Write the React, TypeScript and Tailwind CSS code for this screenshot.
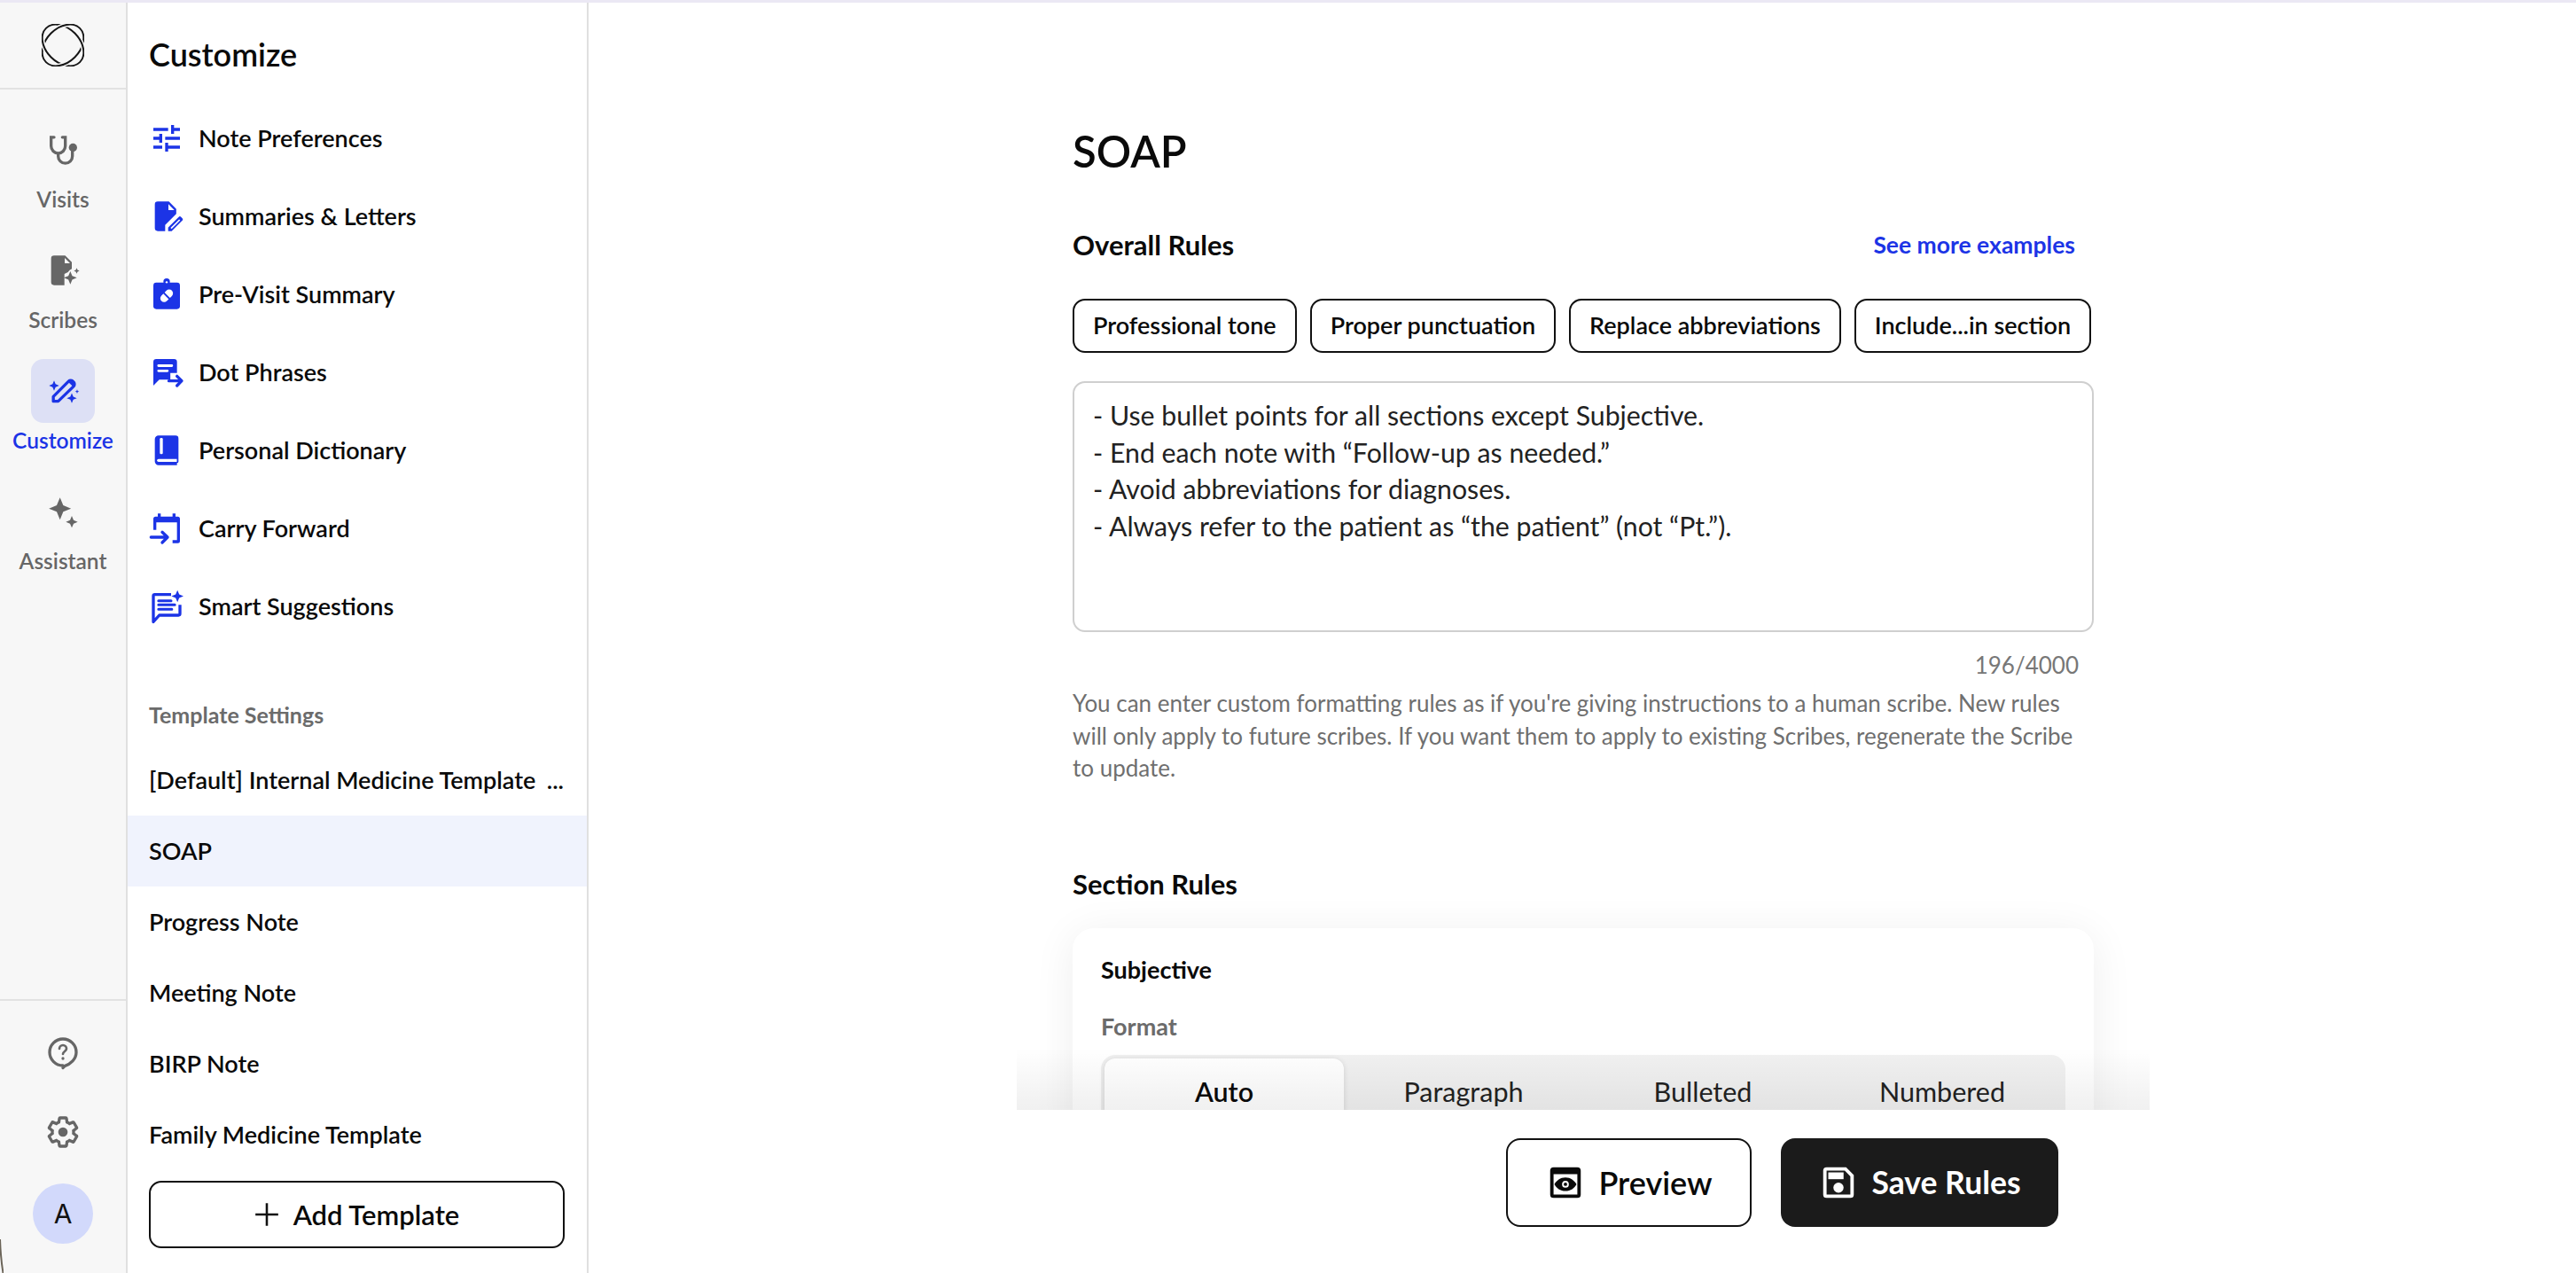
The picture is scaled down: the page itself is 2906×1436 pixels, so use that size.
import React from "react";

const BLUE = "#1c34e6";

function Svg({ className, children, vb = "0 0 24 24" }: { className?: string; children: React.ReactNode; vb?: string }) {
  return (
    <svg viewBox={vb} className={className} fill="currentColor">
      {children}
    </svg>
  );
}

const Tune = () => (
  <Svg className="w-10 h-10">
    <path d="M3 17v2h6v-2H3zM3 5v2h10V5H3zm10 16v-2h8v-2h-8v-2h-2v6h2zM7 9v2H3v2h4v2h2V9H7zm14 4v-2H11v2h10zm-6-4h2V7h4V5h-4V3h-2v6z" />
  </Svg>
);
const EditDoc = () => (
  <Svg className="w-10 h-10">
    <path d="M6 2h7.500L18.500 7v3.400L11 17.900V22H6a2 2 0 0 1-2-2V4a2 2 0 0 1 2-2z" />
    <path d="M13.200 3.800v4h4z" fill="#fff" />
    <path d="M13 22v-2.400l7.200-7.200a1.100 1.100 0 0 1 1.500 0l.9.9a1.100 1.100 0 0 1 0 1.500L15.400 22z" />
    <path d="M15 20.200l5.800-5.800" stroke="#fff" strokeWidth="1" fill="none" />
  </Svg>
);
const ClipPill = () => (
  <Svg className="w-10 h-10">
    <rect x="3" y="4" width="18" height="18" rx="2" />
    <circle cx="12" cy="3.400" r="2.200" />
    <circle cx="12" cy="3.800" r=".7" fill="#fff" />
    <g transform="rotate(-45 12 13)">
      <rect x="7" y="10.400" width="10" height="5.200" rx="2.600" fill="#fff" />
      <rect x="11.400" y="10" width="1.200" height="6" />
    </g>
  </Svg>
);
const ChatArrow = () => (
  <Svg className="w-10 h-10">
    <path d="M5 3h12a2 2 0 0 1 2 2v7.500h-4.500V17H7l-4 4V5a2 2 0 0 1 2-2z" />
    <path d="M6.500 7.500h9M6.500 11h6" stroke="#fff" strokeWidth="1.700" strokeLinecap="round" fill="none" />
    <path d="M13.500 17.800h8.500M19 14.600l3.200 3.200-3.200 3.200" stroke="currentColor" strokeWidth="2" strokeLinecap="round" strokeLinejoin="round" fill="none" />
  </Svg>
);
const Book = () => (
  <Svg className="w-10 h-10">
    <path d="M6.500 2H18a2 2 0 0 1 2 2v15.600a1 1 0 0 1-1 1V22H6.500A2.500 2.500 0 0 1 4 19.500v-15A2.500 2.500 0 0 1 6.500 2z" />
    <rect x="7.400" y="3.600" width="2" height="11" rx=".8" fill="#fff" />
    <path d="M6.500 17.800h12.400v2H6.500a1 1 0 0 1 0-2z" fill="#fff" />
  </Svg>
);
const CalArrow = () => (
  <Svg className="w-10 h-10">
    <path d="M3 5.500A1.500 1.500 0 0 1 4.500 4H6V2h2v2h8V2h2v2h1.500A1.500 1.500 0 0 1 21 5.500V8H3z" />
    <path d="M3 7h2v6H3zM19 7h2v13.500a1.500 1.500 0 0 1-1.500 1.500H16v-2h3z" />
    <path d="M1.400 18h11M9 14.600l3.600 3.400L9 21.600" stroke="currentColor" strokeWidth="2" strokeLinecap="round" strokeLinejoin="round" fill="none" />
  </Svg>
);
const ChatSpark = () => (
  <Svg className="w-10 h-10">
    <path d="M15 4H4a1 1 0 0 0-1 1v17.500L7 18h13a1 1 0 0 0 1-1v-6" stroke="currentColor" strokeWidth="2" fill="none" strokeLinejoin="round" />
    <path d="M6.500 8.200h8.500M6.500 11h11M6.500 14h9" stroke="currentColor" strokeWidth="1.800" strokeLinecap="round" fill="none" />
    <path d="M19.300 1l1.200 2.900 2.900 1.200-2.900 1.200-1.200 2.900-1.200-2.900-2.900-1.200 2.900-1.200z" />
  </Svg>
);

const Logo = () => (
  <svg viewBox="0 0 48 48" className="w-[48px] h-[48px]" fill="none" strokeWidth="2">
    <defs>
      <clipPath id="logo-sides">
        <rect x="0" y="14" width="12" height="20" />
        <rect x="36" y="14" width="12" height="20" />
      </clipPath>
    </defs>
    <ellipse cx="24" cy="24" rx="27" ry="19" transform="rotate(45 24 24)" stroke="#161616" />
    <ellipse cx="24" cy="24" rx="27" ry="19" transform="rotate(-45 24 24)" stroke="#f7f7f7" strokeWidth="5" />
    <ellipse cx="24" cy="24" rx="27" ry="19" transform="rotate(-45 24 24)" stroke="#161616" />
    <g clipPath="url(#logo-sides)">
      <ellipse cx="24" cy="24" rx="27" ry="19" transform="rotate(45 24 24)" stroke="#f7f7f7" strokeWidth="5" />
      <ellipse cx="24" cy="24" rx="27" ry="19" transform="rotate(45 24 24)" stroke="#161616" />
    </g>
  </svg>
);

const Stetho = () => (
  <Svg className="w-10 h-10">
    <path d="M6 3.500H4v6a4.800 4.800 0 0 0 9.600 0v-6h-2" stroke="currentColor" strokeWidth="2" fill="none" strokeLinecap="round" />
    <path d="M8.800 14.300v2a4.800 4.800 0 0 0 9.600 0v-4.500" stroke="currentColor" strokeWidth="2" fill="none" />
    <circle cx="18.800" cy="10.500" r="2.800" />
  </Svg>
);
const DocSpark = () => (
  <Svg className="w-10 h-10">
    <path d="M6 2h7.500l4.500 4.500V11a6 6 0 0 0-2.600 2.200L13 14.400V22H6a2 2 0 0 1-2-2V4a2 2 0 0 1 2-2z" />
    <path d="M13.200 3.600v3.600h3.600z" fill="#f7f7f7" />
    <path d="M17 12.600l1.300 3.100 3.100 1.300-3.100 1.300-1.300 3.100-1.300-3.100-3.100-1.300 3.100-1.300z" />
    <path d="M21.300 10.400l.6 1.300 1.300.6-1.300.6-.6 1.300-.6-1.300-1.300-.6 1.300-.6z" />
  </Svg>
);
const PenSpark = () => (
  <Svg className="w-10 h-10">
    <path d="M5.500 19v-3.200L15.800 5.500a2 2 0 0 1 2.800 0l.6.6a2 2 0 0 1 0 2.800L8.800 19z" stroke="currentColor" strokeWidth="2" fill="none" strokeLinejoin="round" />
    <path d="M15.500 5.800l3.400 3.400 1-1.200a1.800 1.800 0 0 0-.1-2.600l-.5-.5a1.800 1.800 0 0 0-2.600 0z" />
    <path d="M6 5l1 2.400L9.400 8.400 7 9.400 6 11.800 5 9.400 2.600 8.400 5 7.400z" />
    <path d="M18 13.500l1 2.400 2.400 1-2.400 1-1 2.400-1-2.400-2.400-1 2.400-1z" />
    <path d="M21.600 11l.4 1 1 .4-1 .4-.4 1-.4-1-1-.4 1-.4z" />
  </Svg>
);
const Sparkles = () => (
  <Svg className="w-10 h-10">
    <path d="M10 2.500l2.200 5.300 5.300 2.200-5.300 2.200-2.200 5.300-2.200-5.300L2.500 10l5.300-2.200z" />
    <path d="M18 15l1.200 2.800L22 19l-2.800 1.200L18 23l-1.200-2.800L14 19l2.800-1.200z" />
  </Svg>
);
const Help = () => (
  <Svg className="w-10 h-10">
    <path d="M12 3a9 9 0 0 1 9 9c0 4.700-4 8-7.600 9.200l-1.400 1.300V21a9 9 0 0 1 0-18z" stroke="currentColor" strokeWidth="2" fill="none" strokeLinejoin="round" />
    <path d="M9.600 9.600A2.400 2.400 0 0 1 14.400 9.600c0 1.700-2.400 1.900-2.400 3.600" stroke="currentColor" strokeWidth="1.600" fill="none" strokeLinecap="round" />
    <circle cx="12" cy="16.200" r="1" />
  </Svg>
);
const Gear = () => (
  <Svg className="w-10 h-10">
    <path
      d="M19.140 12.940c.04-.3.06-.61.06-.94 0-.32-.02-.64-.07-.94l2.030-1.580c.18-.14.23-.41.12-.61l-1.920-3.320c-.12-.22-.37-.29-.59-.22l-2.390.96c-.5-.38-1.030-.7-1.620-.94l-.36-2.540c-.04-.24-.24-.41-.48-.41h-3.840c-.24 0-.43.17-.47.41l-.36 2.540c-.59.24-1.130.57-1.620.94l-2.390-.96c-.22-.08-.47 0-.59.22L2.740 8.870c-.12.21-.08.47.12.61l2.030 1.580c-.05.3-.09.63-.09.94s.02.64.07.94l-2.030 1.580c-.18.14-.23.41-.12.61l1.920 3.320c.12.22.37.29.59.22l2.390-.96c.5.38 1.030.7 1.620.94l.36 2.540c.05.24.24.41.48.41h3.840c.24 0 .44-.17.47-.41l.36-2.540c.59-.24 1.130-.56 1.620-.94l2.390.96c.22.08.47 0 .59-.22l1.920-3.320c.12-.22.07-.47-.12-.61l-2.010-1.580z"
      stroke="currentColor"
      strokeWidth="2"
      fill="none"
    />
    <circle cx="12" cy="12" r="3.200" />
  </Svg>
);
const Plus = () => (
  <svg viewBox="0 0 24 24" className="w-7 h-7" fill="none" stroke="#111" strokeWidth="2.200">
    <path d="M12 1v22M1 12h22" />
  </svg>
);
const PreviewIcon = () => (
  <Svg className="w-[46px] h-[46px]">
    <path fillRule="evenodd" d="M5 3h14a2 2 0 0 1 2 2v14a2 2 0 0 1-2 2H5a2 2 0 0 1-2-2V5a2 2 0 0 1 2-2zm0 4v12h14V7z" />
    <path fillRule="evenodd" d="M12 9c3 0 5.300 1.800 6.500 4-1.200 2.200-3.500 4-6.500 4s-5.300-1.800-6.500-4C6.700 10.800 9 9 12 9zm0 2a2 2 0 1 0 0 4 2 2 0 0 0 0-4z" />
    <circle cx="12" cy="13" r="1" />
  </Svg>
);
const SaveIcon = () => (
  <Svg className="w-[46px] h-[46px]">
    <path fillRule="evenodd" d="M5 3h11.500L21 7.500V19a2 2 0 0 1-2 2H5a2 2 0 0 1-2-2V5a2 2 0 0 1 2-2zm0 2v14h14V8.300L15.700 5z" />
    <path d="M6 6h9v4H6z" />
    <circle cx="12" cy="15" r="3" />
  </Svg>
);

function RailItem({ icon, label, active }: { icon: React.ReactNode; label: string; active?: boolean }) {
  return (
    <div className={`flex flex-col items-center ${active ? "text-[#1c34e6]" : "text-[#666666]"}`}>
      <div className={`w-[72px] h-[72px] rounded-[14px] flex items-center justify-center ${active ? "bg-[#dde0f5]" : ""}`}>{icon}</div>
      <div className="mt-[4px] text-[24.5px] leading-[32px] font-semibold">{label}</div>
    </div>
  );
}

const menu = [
  { icon: <Tune />, label: "Note Preferences" },
  { icon: <EditDoc />, label: "Summaries & Letters" },
  { icon: <ClipPill />, label: "Pre-Visit Summary" },
  { icon: <ChatArrow />, label: "Dot Phrases" },
  { icon: <Book />, label: "Personal Dictionary" },
  { icon: <CalArrow />, label: "Carry Forward" },
  { icon: <ChatSpark />, label: "Smart Suggestions" },
];

const templates = ["SOAP", "Progress Note", "Meeting Note", "BIRP Note", "Family Medicine Template"];
const chips = ["Professional tone", "Proper punctuation", "Replace abbreviations", "Include...in section"];
const rules = `- Use bullet points for all sections except Subjective.
- End each note with “Follow-up as needed.”
- Avoid abbreviations for diagnoses.
- Always refer to the patient as “the patient” (not “Pt.”).`;

export default function App() {
  return (
    <div className="w-full h-screen bg-white flex flex-col overflow-hidden text-[#0a0a0a] font-['Lato','Liberation_Sans',sans-serif]">
      <div className="h-[3px] shrink-0 bg-[#ebe8f4]" />
      <div className="flex-1 min-h-0 flex">
        <aside className="relative w-[144px] shrink-0 bg-[#f7f7f7] border-r-2 border-[#e0e0e0] flex flex-col">
          <div className="h-[98px] shrink-0 border-b-2 border-[#e2e2e2] flex items-center justify-center">
            <Logo />
          </div>
          <nav className="pt-[32px] flex flex-col gap-[28px]">
            <RailItem icon={<Stetho />} label="Visits" />
            <RailItem icon={<DocSpark />} label="Scribes" />
            <RailItem icon={<PenSpark />} label="Customize" active />
            <RailItem icon={<Sparkles />} label="Assistant" />
          </nav>
          <div className="mt-auto border-t-2 border-[#e2e2e2] h-[309px] shrink-0 flex flex-col items-center text-[#666666]">
            <div className="mt-[38px]">
              <Help />
            </div>
            <div className="mt-[50px]">
              <Gear />
            </div>
            <div className="mt-[38px] w-[68px] h-[68px] rounded-full bg-[#d2d9fb] flex items-center justify-center text-[30px] text-[#111] font-['Inter',sans-serif]">
              A
            </div>
          </div>
          <svg viewBox="0 0 4 38" className="absolute left-0 bottom-0 w-[4px] h-[38px]" fill="none" stroke="#6b6458" strokeWidth="2">
            <path d="M0 0c.5 14 1.500 26 3.500 38" />
          </svg>
        </aside>

        <aside className="w-[520px] shrink-0 border-r-2 border-[#e0e0e0] flex flex-col">
          <h2 className="pl-[24px] pt-[36px] text-[36px] leading-[44px] font-semibold">Customize</h2>
          <ul className="mt-[29px]">
            {menu.map((m) => (
              <li key={m.label} className="h-[88px] pl-[24px] flex items-center gap-[16px] text-[27px] font-semibold">
                <span style={{ color: BLUE }} className="flex">
                  {m.icon}
                </span>
                <span>{m.label}</span>
              </li>
            ))}
          </ul>
          <div className="mt-[62px] pl-[24px] text-[25px] leading-[32px] font-bold text-[#6b6b6b]">Template Settings</div>
          <ul className="mt-[18px]">
            <li className="h-[80px] pl-[24px] pr-[26px] flex items-center justify-between text-[27px] font-semibold">
              <span>[Default] Internal Medicine Template</span>
              <span>...</span>
            </li>
            {templates.map((t) => (
              <li key={t} className={`h-[80px] pl-[24px] flex items-center text-[27px] font-semibold ${t === "SOAP" ? "bg-[#f0f3fd]" : ""}`}>
                {t}
              </li>
            ))}
          </ul>
          <button className="mt-[12px] ml-[24px] w-[469px] h-[76px] rounded-[14px] border-2 border-[#111] flex items-center justify-center gap-[16px] text-[31px] font-semibold">
            <Plus />
            Add Template
          </button>
        </aside>

        <main className="flex-1 min-w-0 flex flex-col items-center pl-[2px]">
          <div className="relative w-[1278px] h-[1249px] shrink-0 overflow-hidden">
            <div className="mx-auto w-[1152px] pt-[137px]">
              <h1 className="text-[49px] leading-[60px] font-semibold">SOAP</h1>
              <div className="mt-[56px] flex items-center justify-between pr-[21px]">
                <h3 className="text-[31px] leading-[40px] font-bold">Overall Rules</h3>
                <a className="text-[26.5px] leading-[40px] font-bold text-[#1c34e6]">See more examples</a>
              </div>
              <div className="mt-[41px] flex gap-[15px]">
                {chips.map((c) => (
                  <button key={c} className="h-[61px] px-[21px] rounded-[14px] border-2 border-[#111] text-[27px] font-semibold whitespace-nowrap">
                    {c}
                  </button>
                ))}
              </div>
              <textarea
                readOnly
                defaultValue={rules}
                className="mt-[32px] block w-full h-[283px] resize-none rounded-[14px] border-2 border-[#cfcfcf] pt-[16px] px-[21px] text-[30.25px] leading-[41.7px] text-[#222] outline-none"
              />
              <div className="mt-[19px] pr-[17px] text-right text-[26px] leading-[36px] text-[#777777]">196/4000</div>
              <p className="mt-[7px] text-[26px] leading-[36.5px] text-[#6f6f6f]">
                You can enter custom formatting rules as if you're giving instructions to a human scribe. New rules will only apply to future scribes. If you want them to apply to existing Scribes, regenerate the Scribe to update.
              </p>
              <h3 className="mt-[92px] text-[31px] leading-[40px] font-bold">Section Rules</h3>
              <section className="mt-[30px] rounded-[24px] bg-white px-[32px] pt-[29px] shadow-[0_6px_48px_rgba(0,0,0,0.07)]">
                <div className="text-[27px] leading-[36px] font-bold">Subjective</div>
                <div className="mt-[28px] text-[27px] leading-[36px] font-bold text-[#6b6b6b]">Format</div>
                <div className="mt-[14px] grid grid-cols-4 rounded-[16px] bg-[#f1f1f1] p-[4px] text-[30.5px]">
                  {["Auto", "Paragraph", "Bulleted", "Numbered"].map((t, i) => (
                    <div key={t} className={`h-[100px] pt-[17px] text-center leading-[40px] ${i === 0 ? "bg-white rounded-[12px] font-semibold shadow-[0_1px_6px_rgba(0,0,0,0.12)]" : "text-[#222]"}`}>
                      {t}
                    </div>
                  ))}
                </div>
              </section>
            </div>
            <div className="absolute left-0 right-0 bottom-0 h-[70px] bg-gradient-to-b from-transparent to-[rgba(0,0,0,0.06)]" />
          </div>
          <div className="w-[1278px] flex-1 flex items-start justify-end gap-[33px] pt-[32px] pr-[103px] bg-white">
            <button className="w-[277px] h-[100px] rounded-[16px] border-2 border-[#111] flex items-center justify-center gap-[14px] text-[36px] font-semibold">
              <PreviewIcon />
              Preview
            </button>
            <button className="w-[313px] h-[100px] rounded-[16px] bg-[#1b1b1b] text-white flex items-center justify-center gap-[14px] text-[35.5px] font-bold">
              <SaveIcon />
              Save Rules
            </button>
          </div>
        </main>
      </div>
    </div>
  );
}
